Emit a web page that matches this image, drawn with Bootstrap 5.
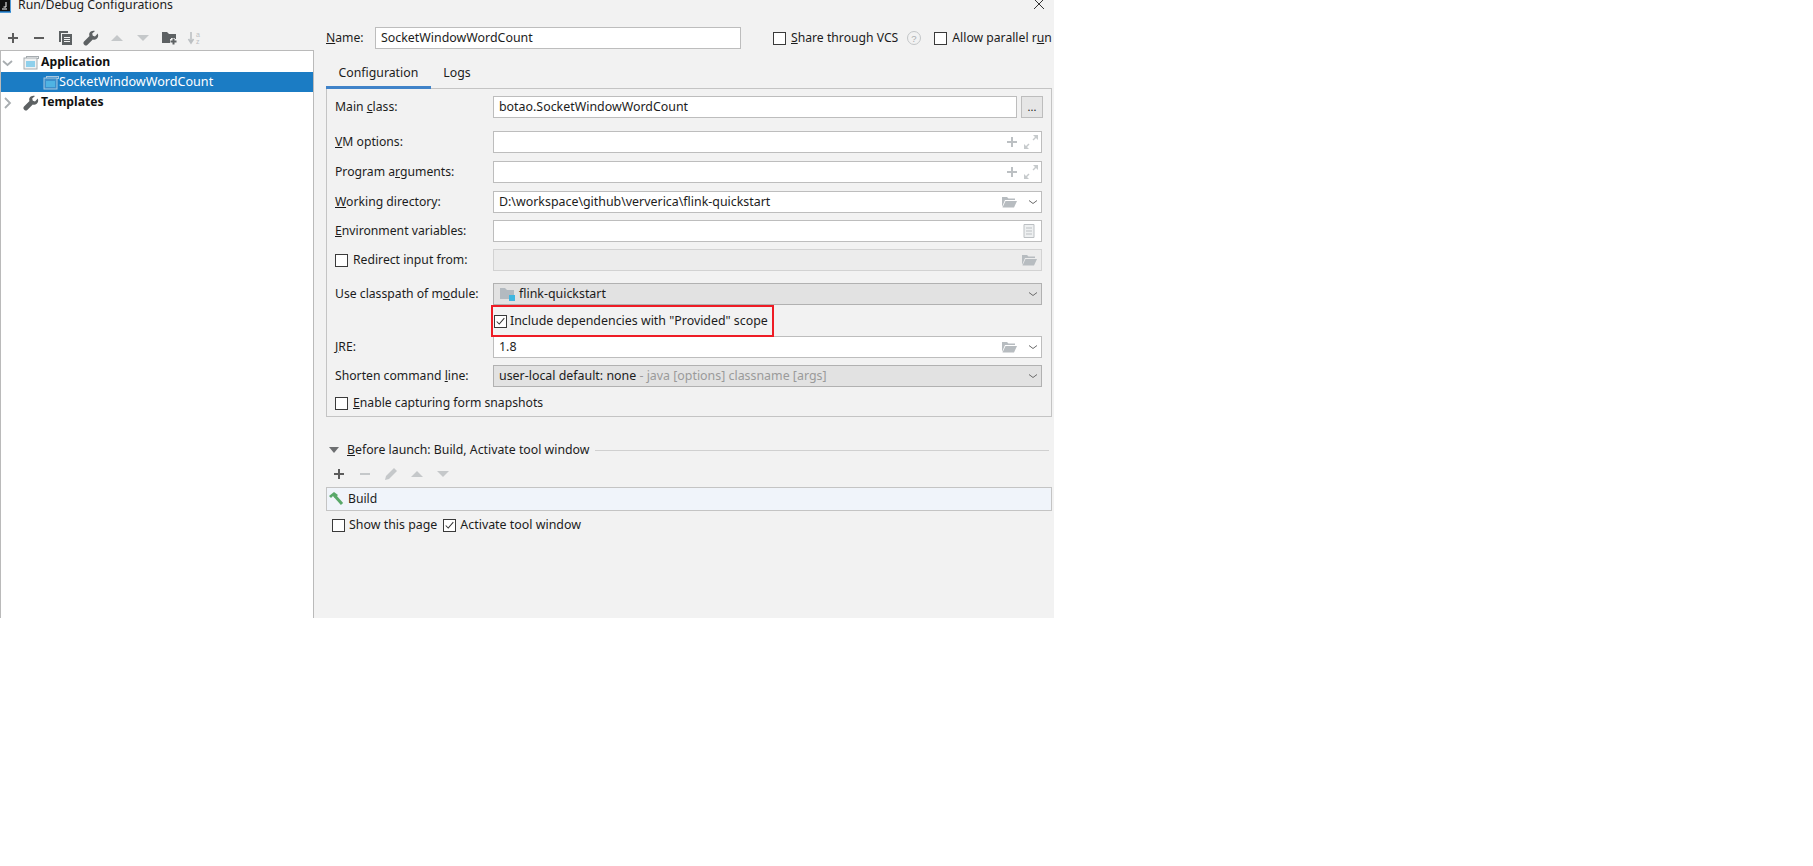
<!DOCTYPE html>
<html lang="en">
<head>
<meta charset="utf-8">
<title>Run/Debug Configurations</title>
<link rel="stylesheet" href="https://cdn.jsdelivr.net/npm/bootstrap@5.3.0/dist/css/bootstrap.min.css">
<style>
body{background:#fff;font-family:"Noto Sans",sans-serif;font-size:12.2px;color:#1c1c1c;line-height:1}
.dlg{width:1054px;height:618px;background:#f2f2f2;overflow:hidden}
.dlg-title{height:12px;line-height:10px;font-size:12.3px;position:relative}
.dlg-title-txt{padding-left:18px}
.dlg-x{width:14px;height:14px;position:absolute;left:1032px;top:-3px}
.side{width:314px;flex:none;height:606px}
.side-tools{height:38px;padding:14px 0 0 5px;gap:10px}
.ico{width:16px;height:16px;flex:none}
.tree{flex:1;background:#fff;border:1px solid #bababa;border-bottom:0;padding:0;border-radius:0}
.tree-row{height:20px;display:flex;align-items:center;background:transparent;border:0;border-radius:0!important;padding:1px 0 0;color:#111;font-size:12.6px}
.tree-row.first{height:21px;padding-top:2px}
.tree-row.picked{background:#1b7cc4;color:#fff;z-index:1}
.tree-row b{font-weight:700;font-size:12.2px}
.tree-pick-ico{margin-left:42px}
.tree-arrow{margin-left:-1px}
.tree-ico{margin-left:7px;margin-right:2px}
.main-col{padding-left:12px;width:740px;flex:none}
.name-row{height:22px;margin-top:15px}
.lbl-name{width:49px;flex:none}
.fld{height:22px;border:1px solid #bdbdbd;background:#fff;border-radius:0;font-size:12.4px;padding:0 5px 1px;color:#1c1c1c;box-shadow:none;font-family:inherit}
.fld:disabled{background:#ececec;border-color:#d2d2d2}
.fld-name{width:366px;flex:none}
.share-lbl{margin-left:32px}
.allow-lbl{margin-left:12px}
.tab-strip{border-bottom:1px solid #c4c4c4;height:40px;margin-right:2px;flex-wrap:nowrap}
.tab-strip .nav-link{border:0;color:#1c1c1c;padding:0 12.500px;height:40px;line-height:47px;border-radius:0;font-size:12.3px;background:none}
.tab-strip .nav-link.active{border-bottom:3px solid #4083c9;background:none;color:#1c1c1c;height:40px}
.cfg{border:1px solid #c4c4c4;border-top:0;height:328px;margin-right:2px;padding:7px 9px 0 0}
.frow{height:22px;display:flex;align-items:center;position:relative}
.flabel{width:166px;flex:none;padding-left:8px;padding-top:1px}
.wrap-fld{flex:1;position:relative}
.wrap-fld .fld{width:100%;display:block}
.wrap-fld .drop{background:#e2e2e2;border:1px solid #b1b1b1;height:22px;display:flex;align-items:center;padding:0 5px;font-size:12.4px}
.end-icons{position:absolute;top:3px;right:1px;display:flex;align-items:center;gap:8px}
.end-icons.e2{right:3px;gap:3px}
.end-icons.e3{right:5px}
.m13{margin-top:13px}.m8{margin-top:8px}.m7{margin-top:7px}.m12{margin-top:12px}.m5{margin-top:5px}
.more-btn{width:22px;height:22px;margin-left:4px;margin-right:-1px;padding:0;border:1px solid #bdbdbd;background:#e6e6e6;border-radius:0;font-size:11px;line-height:14px;color:#222;flex:none}
.box{appearance:none;width:13px;height:13px;border:1px solid #3a3a3a;background:#fff;margin:0 5px 0 0;flex:none;border-radius:0;display:inline-block;position:relative;vertical-align:middle}
.box:checked{background-image:url("data:image/svg+xml,%3Csvg xmlns='http://www.w3.org/2000/svg' viewBox='0 0 13 13'%3E%3Cpath d='M2 6.5l3 3 6-7' fill='none' stroke='%23333' stroke-width='1.2'/%3E%3C/svg%3E")}
.inc-row{height:30px;margin-top:1px;display:flex;align-items:center;padding-left:166px}
.hilite{height:32px;width:283px;border:2px solid #ee1c25;margin-left:-2px;display:flex;align-items:center;padding-left:1px;position:relative;z-index:2;margin-top:-1px;margin-bottom:-1px;white-space:nowrap;font-size:12.4px}
.hilite .box{margin-right:3px}
.muted-txt{color:#9a9a9a}
.before-row{height:22px;margin-top:21px;margin-right:5px;padding-top:2px;font-size:12.3px}
.before-txt{margin-left:5px}
.before-line{flex:1;height:1px;background:#d0d0d0;margin-left:6px}
.tools2{height:27px;gap:10px;padding-left:5px}
.build-row{height:24px;border:1px solid #c4c4c4;background:#f0f4fa;margin-right:2px;padding-left:1px;gap:4px;border-radius:0}
.last-row{height:22px;margin-top:3px;padding-left:6px;font-size:12.4px}
.last-row .box{margin-right:4px}
.sp-l{margin-left:6px}
</style>
</head>
<body class="m-0">
<svg width="0" height="0" class="d-block" aria-hidden="true">
<defs>
<symbol id="i-folder" viewBox="0 0 16 16"><path d="M1 3h5l1.500 1.500H14V6H4L1 13z" fill="#b7bcc0"/><path d="M4.500 7H16l-3 6.500H1.500z" fill="#b7bcc0"/></symbol>
<symbol id="i-chev" viewBox="0 0 16 16"><path d="M4 6.500l4 3 4-3" fill="none" stroke="#6b6b6b" stroke-width="1"/></symbol>
<symbol id="i-plusg" viewBox="0 0 16 16"><path d="M8 3v10M3 8h10" stroke="#bcc0c3" stroke-width="2"/></symbol>
<symbol id="i-exp" viewBox="0 0 16 16"><path d="M15 1v5l-2-2-2.500 2.500-1-1L12 3l-2-2z" fill="#c6cacc"/><path d="M1 15v-5l2 2 2.500-2.500 1 1L4 13l2 2z" fill="#c6cacc"/></symbol>
<symbol id="i-wrench" viewBox="0 0 16 16"><path d="M14.800 3.600l-2.800 2.800-2.200-.6-.6-2.200L12 1c-2-.8-4.200-.1-5.200 1.500-.7 1.100-.8 2.400-.3 3.600L1 11.600c-.8.8-.8 2 0 2.800l.5.500c.8.8 2 .8 2.800 0l5.500-5.500c1.200.5 2.500.4 3.600-.3 1.600-1 2.300-3.200 1.400-5.500z" fill="#5d6163"/></symbol>
<symbol id="i-win" viewBox="0 0 16 16"><rect x="3.500" y="1.500" width="12" height="2" fill="none" stroke="#a5abaf"/><rect x="1" y="3" width="13" height="11" fill="#f0f2f3" stroke="#a5abaf"/><rect x="3" y="6" width="9" height="6" fill="#8fd0ec"/></symbol>
<symbol id="i-winw" viewBox="0 0 16 16"><rect x="3.500" y="1.500" width="12" height="2" fill="none" stroke="#a8c8e0"/><rect x="1" y="3" width="13" height="11" fill="#3d8fcb" stroke="#a8c8e0"/><rect x="3" y="6" width="9" height="6" fill="#4fb3e3"/></symbol>
</defs>
</svg>
<div class="dlg">
  <div class="dlg-title">
    <svg class="position-absolute top-0 start-0" width="11" height="13" viewBox="0 0 11 13"><rect width="10" height="12" fill="#111"/><path d="M0 12h11V0" fill="none" stroke="#1d7fd0" stroke-width="1.500"/><path d="M2 9h5M6 2v5H3.500" stroke="#fff" fill="none"/></svg>
    <span class="dlg-title-txt d-inline-block">Run/Debug Configurations</span>
    <svg class="dlg-x" viewBox="0 0 14 14"><path d="M2 2l10 10M12 2L2 12" stroke="#333" stroke-width="1"/></svg>
  </div>
  <div class="d-flex">
    <div class="side d-flex flex-column">
      <div class="side-tools d-flex align-items-center flex-none">
        <svg class="ico" viewBox="0 0 16 16"><path d="M8 3v10M3 8h10" stroke="#5c5c5c" stroke-width="2"/></svg>
        <svg class="ico" viewBox="0 0 16 16"><path d="M3 8h10" stroke="#5c5c5c" stroke-width="2"/></svg>
        <svg class="ico" viewBox="0 0 16 16"><path d="M2 1h9v2H4v9H2z" fill="#5d6163"/><path d="M5 4h10v11H5z" fill="#5d6163"/><path d="M7 7.500h6M7 9.500h6M7 11.500h6" stroke="#f2f2f2"/></svg>
        <svg class="ico"><use href="#i-wrench"/></svg>
        <svg class="ico" viewBox="0 0 16 16"><path d="M2 11L8 5l6 6z" fill="#c5c8ca"/></svg>
        <svg class="ico" viewBox="0 0 16 16"><path d="M2 5l6 6 6-6z" fill="#c5c8ca"/></svg>
        <svg class="ico" viewBox="0 0 16 16"><path d="M1 2h5l2 2h7v9H1z" fill="#5d6163"/><path d="M9 11h6M12 8v6" stroke="#f2f2f2" stroke-width="4"/><path d="M9.500 11.500h6M12.500 8.500v6" stroke="#5d6163" stroke-width="2"/></svg>
        <svg class="ico" viewBox="0 0 16 16"><path d="M4 2v10M1.500 9L4 13l2.500-4" stroke="#bcc0c3" stroke-width="1.600" fill="none"/><text x="9" y="7" font-size="7" fill="#bcc0c3" font-family="Liberation Sans">a</text><text x="9" y="14" font-size="7" fill="#bcc0c3" font-family="Liberation Sans">z</text></svg>
      </div>
      <div class="list-group tree">
        <div class="list-group-item tree-row first"><svg class="ico tree-arrow" viewBox="0 0 16 16"><path d="M3 6l4.500 4L12 6" fill="none" stroke="#a8adb0" stroke-width="1.800"/></svg><svg class="ico tree-ico"><use href="#i-win"/></svg><b>Application</b></div>
        <div class="list-group-item tree-row picked"><svg class="ico tree-pick-ico"><use href="#i-winw"/></svg><span>SocketWindowWordCount</span></div>
        <div class="list-group-item tree-row"><svg class="ico tree-arrow" viewBox="0 0 16 16"><path d="M5 3l5 5-5 5" fill="none" stroke="#a8adb0" stroke-width="1.800"/></svg><svg class="ico tree-ico"><use href="#i-wrench"/></svg><b>Templates</b></div>
      </div>
    </div>
    <div class="main-col">
      <div class="name-row d-flex align-items-center">
        <label class="lbl-name"><u>N</u>ame:</label>
        <input class="fld fld-name" value="SocketWindowWordCount">
        <label class="d-flex align-items-center text-nowrap share-lbl"><input type="checkbox" class="box"><span><u>S</u>hare through VCS</span></label>
        <svg class="ico ms-2" viewBox="0 0 16 16"><circle cx="8" cy="8" r="6.500" fill="none" stroke="#c3c6c8"/><text x="8" y="11.500" font-size="9.500" text-anchor="middle" fill="#a9adb0" font-family="Liberation Sans">?</text></svg>
        <label class="d-flex align-items-center text-nowrap allow-lbl"><input type="checkbox" class="box"><span>Allow parallel r<u>u</u>n</span></label>
      </div>
      <ul class="nav nav-tabs tab-strip">
        <li class="nav-item"><a class="nav-link active" href="#">Configuration</a></li>
        <li class="nav-item"><a class="nav-link" href="#">Logs</a></li>
      </ul>
      <div class="cfg">
        <div class="frow"><label class="flabel">Main <u>c</u>lass:</label><div class="wrap-fld"><input class="fld" value="botao.SocketWindowWordCount"></div><button class="btn more-btn">...</button></div>
        <div class="frow m13"><label class="flabel"><u>V</u>M options:</label><div class="wrap-fld"><input class="fld"><div class="end-icons e2"><svg class="ico"><use href="#i-plusg"/></svg><svg class="ico"><use href="#i-exp"/></svg></div></div></div>
        <div class="frow m8"><label class="flabel">Program a<u>r</u>guments:</label><div class="wrap-fld"><input class="fld"><div class="end-icons e2"><svg class="ico"><use href="#i-plusg"/></svg><svg class="ico"><use href="#i-exp"/></svg></div></div></div>
        <div class="frow m8"><label class="flabel"><u>W</u>orking directory:</label><div class="wrap-fld"><input class="fld" value="D:\workspace\github\ververica\flink-quickstart"><div class="end-icons"><svg class="ico"><use href="#i-folder"/></svg><svg class="ico"><use href="#i-chev"/></svg></div></div></div>
        <div class="frow m7"><label class="flabel"><u>E</u>nvironment variables:</label><div class="wrap-fld"><input class="fld"><div class="end-icons e3"><svg class="ico" viewBox="0 0 16 16"><path d="M3 1.500h10v13H3z" fill="#eef0f1" stroke="#bcc0c3"/><path d="M5 5h6M5 8h6M5 11h6" stroke="#bcc0c3"/></svg></div></div></div>
        <div class="frow m7"><label class="flabel d-flex align-items-center"><input type="checkbox" class="box">Redirect input from:</label><div class="wrap-fld"><input class="fld" disabled><div class="end-icons e3"><svg class="ico"><use href="#i-folder"/></svg></div></div></div>
        <div class="frow m12"><label class="flabel">Use classpath of m<u>o</u>dule:</label><div class="wrap-fld"><div class="drop"><svg class="ico me-1" viewBox="0 0 16 16"><path d="M1 2h5l2 2h7v9H1z" fill="#b3bac0"/><rect x="10" y="9" width="6" height="6" fill="#40b6e0"/></svg><span>flink-quickstart</span></div><div class="end-icons"><svg class="ico"><use href="#i-chev"/></svg></div></div></div>
        <div class="inc-row"><label class="hilite"><input type="checkbox" class="box" checked><span>Include dependencies with "Provided" scope</span></label></div>
        <div class="frow"><label class="flabel"><u>J</u>RE:</label><div class="wrap-fld"><input class="fld" value="1.8"><div class="end-icons"><svg class="ico"><use href="#i-folder"/></svg><svg class="ico"><use href="#i-chev"/></svg></div></div></div>
        <div class="frow m7"><label class="flabel">Shorten command <u>l</u>ine:</label><div class="wrap-fld"><div class="drop"><span>user-local default: none</span><span class="muted-txt">&nbsp;- java [options] classname [args]</span></div><div class="end-icons"><svg class="ico"><use href="#i-chev"/></svg></div></div></div>
        <div class="frow m5"><label class="flabel d-flex align-items-center text-nowrap"><input type="checkbox" class="box"><span><u>E</u>nable capturing form snapshots</span></label></div>
      </div>
      <div class="before-row d-flex align-items-center">
        <svg class="ico" viewBox="0 0 16 16"><path d="M3 5h10l-5 6z" fill="#6d6f71"/></svg>
        <span class="before-txt"><u>B</u>efore launch: Build, Activate tool window</span>
        <div class="before-line"></div>
      </div>
      <div class="tools2 d-flex align-items-center">
        <svg class="ico" viewBox="0 0 16 16"><path d="M8 3v10M3 8h10" stroke="#5c5c5c" stroke-width="2"/></svg>
        <svg class="ico" viewBox="0 0 16 16"><path d="M3 8h10" stroke="#c5c8ca" stroke-width="2"/></svg>
        <svg class="ico" viewBox="0 0 16 16"><path d="M2 14l1-4 8-8 3 3-8 8z" fill="#c5c8ca"/></svg>
        <svg class="ico" viewBox="0 0 16 16"><path d="M2 11L8 5l6 6z" fill="#c5c8ca"/></svg>
        <svg class="ico" viewBox="0 0 16 16"><path d="M2 5l6 6 6-6z" fill="#c5c8ca"/></svg>
      </div>
      <div class="build-row d-flex align-items-center">
        <svg class="ico" viewBox="0 0 16 16"><path d="M1 5l5-4 4 3-3 3-2-2-2 2z" fill="#59a869"/><path d="M6.500 4.500L14 13" stroke="#59a869" stroke-width="3"/></svg>
        <span>Build</span>
      </div>
      <div class="last-row d-flex align-items-center">
        <label class="d-flex align-items-center"><input type="checkbox" class="box">Show this page</label>
        <label class="d-flex align-items-center sp-l"><input type="checkbox" class="box" checked>Activate tool window</label>
      </div>
    </div>
  </div>
</div>
</body>
</html>
